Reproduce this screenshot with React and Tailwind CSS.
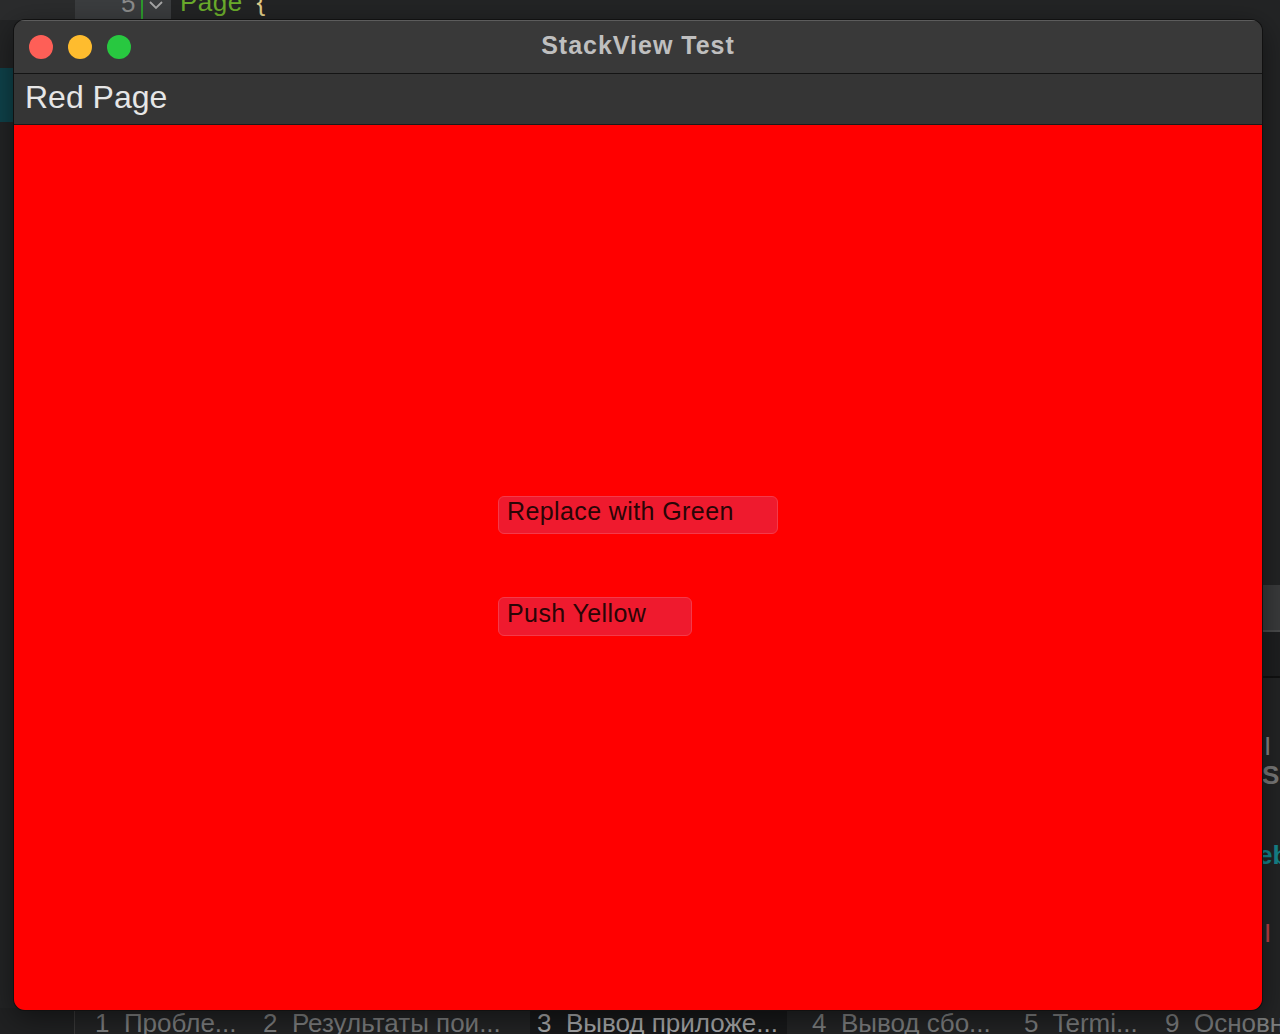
const tabs = [
  { label: "1  Пробле...", w: "w-[168px]" },
  { label: "2  Результаты пои...", w: "w-[267px]" },
];

export default function App() {
  return (
    <div
      className="relative w-[1280px] h-[1034px] overflow-hidden bg-[#232425]"
      style={{ fontFamily: '"Liberation Sans", "Noto Sans", Arial, sans-serif' }}
    >
      {/* IDE behind the window */}
      <div className="absolute left-0 top-0 w-[75px] h-[20px] bg-[#2b2c2d]" />
      <div className="absolute left-[75px] top-0 w-[96px] h-[20px] bg-[#3b3d3f] flex items-center">
        <span className="ml-[46px] text-[26px] leading-none text-[#8d8d8d] -mt-[14px]">5</span>
        <span className="ml-[6px] w-[2px] h-[20px] bg-[#2e9c2e]" />
        <svg width="18" height="12" viewBox="0 0 18 12" className="ml-[4px] -mt-[10px]">
          <path d="M3 3l6 6 6-6" fill="none" stroke="#a8a8a8" strokeWidth="1.8" />
        </svg>
      </div>
      <div className="absolute left-[180px] -top-[11px] text-[26px] leading-none text-[#6cae2c] tracking-[0.5px]">
        Page <span className="text-[#e3d08a] ml-[6px]">{"{"}</span>
      </div>
      <div className="absolute left-0 top-[68px] w-[14px] h-[54px] bg-[#0f434b]" />

      {/* right edge fragments */}
      <div className="absolute left-[1262px] top-[585px] w-[18px] h-[47px] bg-[#3a3b3c] border-b-2 border-[#4a4b4c]" />
      <div className="absolute left-[1262px] top-[632px] w-[18px] h-[46px] bg-[#1e1f20] border-b-2 border-[#111]" />
      <div className="absolute left-[1264px] top-[733px] text-[26px] leading-none text-[#8a8a8a]">I</div>
      <div className="absolute left-[1262px] top-[762px] text-[26px] leading-none font-bold text-[#7a7a7a]">S</div>
      <div className="absolute left-[1258px] top-[842px] text-[26px] leading-none font-bold text-[#15868d]">eb</div>
      <div className="absolute left-[1264px] top-[920px] text-[26px] leading-none text-[#c0444a]">I</div>

      {/* bottom tool tabs */}
      <div className="absolute left-0 top-[1008px] w-[1280px] h-[26px] flex items-stretch text-[26px] leading-none text-[#7f8081] whitespace-nowrap">
        <div className="w-[75px] shrink-0 h-full bg-[#202122] border-r border-[#3a3a3a]" />
        <div className="w-[20px] shrink-0" />
        {tabs.map((t) => (
          <div key={t.label} className={`${t.w} shrink-0 whitespace-pre pt-[2px]`}>{t.label}</div>
        ))}
        <div className="w-[257px] shrink-0 h-full bg-[#18191a] pl-[7px] pt-[2px] whitespace-pre text-[#a9aaab]">
          3  Вывод приложе...
        </div>
        <div className="w-[25px] shrink-0" />
        <div className="w-[212px] shrink-0 whitespace-pre pt-[2px]">4  Вывод сбо...</div>
        <div className="w-[141px] shrink-0 whitespace-pre pt-[2px]">5  Termi...</div>
        <div className="shrink-0 whitespace-pre pt-[2px]">9  Основные</div>
      </div>

      {/* app window */}
      <div className="absolute left-[14px] top-[20px] w-[1248px] h-[990px] rounded-[11px] overflow-hidden flex flex-col shadow-[0_0_0_1px_#111,0_8px_30px_rgba(0,0,0,0.5)]">
        <div className="relative h-[54px] bg-[#393939] border-t border-[#5c5c5c] border-b border-b-[#141414] flex items-center justify-center shrink-0">
          <div className="absolute left-[15px] top-[14px] flex gap-[15px]">
            <span className="w-[24px] h-[24px] rounded-full bg-[#fe5f57]" />
            <span className="w-[24px] h-[24px] rounded-full bg-[#febc2e]" />
            <span className="w-[24px] h-[24px] rounded-full bg-[#28c840]" />
          </div>
          <span className="text-[25px] font-bold text-[#bfbfbf] tracking-[1px] -mt-[2px]">StackView Test</span>
        </div>
        <div className="h-[51px] bg-[#353535] border-b border-[#1a1a1a] flex items-center pl-[11px] shrink-0">
          <span className="text-[32px] text-[#e6e6e6] -mt-[4px]">Red Page</span>
        </div>
        <div className="flex-1 bg-[#ff0000] flex flex-col items-center justify-center pb-[4px]">
          <div className="flex flex-col items-start gap-[63px] w-[280px]">
            <button className="w-[280px] h-[38px] rounded-[6px] bg-[#ef1a2e] border border-[#f43a4a] text-left pl-[8px] text-[25px] tracking-[0.4px] leading-none text-[#2a0506] pb-[6px]">
              Replace with Green
            </button>
            <button className="w-[194px] h-[39px] rounded-[6px] bg-[#ef1a2e] border border-[#f43a4a] text-left pl-[8px] text-[25px] tracking-[0.4px] leading-none text-[#2a0506] pb-[6px]">
              Push Yellow
            </button>
          </div>
        </div>
      </div>
    </div>
  );
}
